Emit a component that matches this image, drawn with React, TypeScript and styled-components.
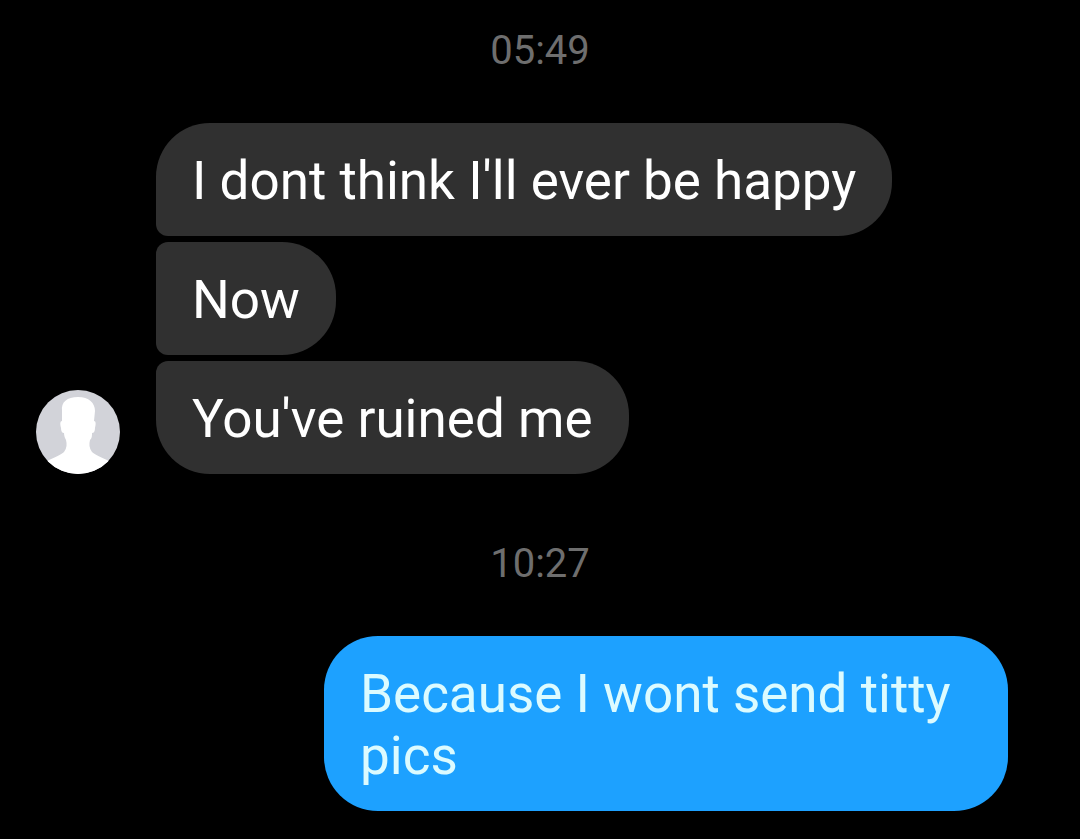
import React from "react";
import styled, { createGlobalStyle } from "styled-components";

const GlobalStyle = createGlobalStyle`
  * { box-sizing: border-box; }
  body { margin: 0; background: #000; font-family: Roboto, "Liberation Sans", sans-serif; }
`;

const Conversation = styled.main`
  display: flex;
  flex-direction: column;
  padding: 28px 0;
`;

const Timestamp = styled.time<{ $later?: boolean }>`
  display: block;
  margin: ${(p) => (p.$later ? "67px" : "0")} 0 49px;
  font-size: 40px;
  line-height: 46px;
  text-align: center;
  color: #6e6e6e;
`;

const IncomingGroup = styled.section`
  display: flex;
  align-items: flex-end;
  gap: 36px;
  padding: 0 72px 0 36px;
`;

const Avatar = styled.svg`
  flex: none;
  width: 84px;
  height: 84px;
`;

const BubbleStack = styled.div`
  display: flex;
  flex-direction: column;
  align-items: flex-start;
  gap: 6px;
`;

const corners = {
  first: "54px 54px 54px 12px",
  middle: "12px 54px 54px 12px",
  last: "12px 54px 54px 54px",
  single: "54px",
};

const Bubble = styled.p<{ $corners: keyof typeof corners }>`
  margin: 0;
  padding: 27px 36px 24px;
  border-radius: ${(p) => corners[p.$corners]};
  background: #303030;
  color: #fff;
  font-size: 53px;
  line-height: 62px;
`;

const SentBubble = styled(Bubble)`
  align-self: flex-end;
  max-width: 684px;
  margin: 0 72px;
  background: #1da1ff;
  color: #dcfbff;
`;

export default function App() {
  return (
    <>
      <GlobalStyle />
      <Conversation>
        <Timestamp>05:49</Timestamp>
        <IncomingGroup>
          <Avatar viewBox="0 0 84 84" role="img" aria-label="Profile picture">
            <defs>
              <clipPath id="avatar-circle">
                <circle cx="42" cy="42" r="42" />
              </clipPath>
            </defs>
            <g clipPath="url(#avatar-circle)">
              <rect width="84" height="84" fill="#d2d3d9" />
              <path
                d="M42 7C31 7 25 12 26 21L26 31C24 31 24 34 25 38C25 41 26 43 28 43C28 46 29 48 30 50C31 54 31 58 28 62C25 65 19 67 13 70L6 75V84H78V75L71 70C65 67 59 65 56 62C53 58 53 54 54 50C56 48 56 46 56 43C58 43 59 41 59 38C60 34 60 31 58 31L59 21C59 13 53 7 42 7Z"
                fill="#fff"
              />
            </g>
          </Avatar>
          <BubbleStack>
            <Bubble $corners="first">I dont think I'll ever be happy</Bubble>
            <Bubble $corners="middle">Now</Bubble>
            <Bubble $corners="last">You've ruined me</Bubble>
          </BubbleStack>
        </IncomingGroup>
        <Timestamp $later>10:27</Timestamp>
        <SentBubble $corners="single">Because I wont send titty pics</SentBubble>
      </Conversation>
    </>
  );
}
